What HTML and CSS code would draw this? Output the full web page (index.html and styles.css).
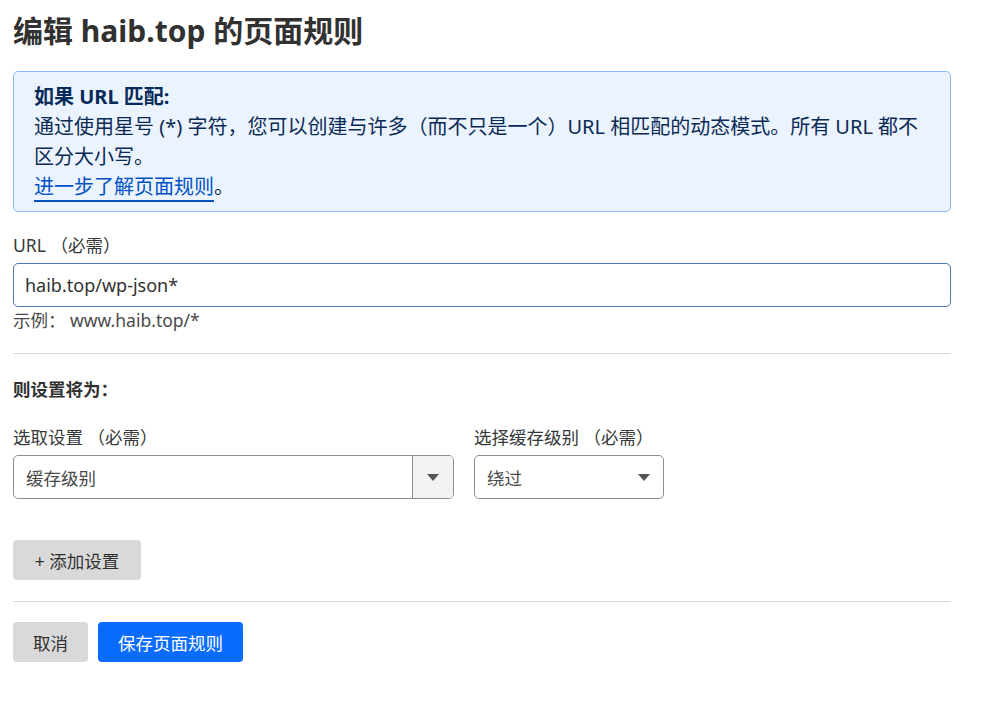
FILE: index.html
```html
<!DOCTYPE html>
<html lang="zh-CN">
<head>
<meta charset="utf-8">
<title>编辑 haib.top 的页面规则</title>
<link rel="stylesheet" href="styles.css">
</head>
<body>
<main class="page">
  <h1 class="title">编辑 haib.top 的页面规则</h1>

  <section class="info">
    <div class="info-head">如果 URL 匹配:</div>
    <p class="info-text">通过使用星号 (*) 字符，您可以创建与许多（而不只是一个）URL 相匹配的动态模式。所有 URL 都不区分大小写。</p>
    <p class="info-text"><a class="link" href="#">进一步了解页面规则</a>。</p>
  </section>

  <div class="field">
    <label class="label">URL （必需）</label>
    <div class="input">haib.top/wp-json*</div>
    <div class="hint">示例： www.haib.top/*</div>
  </div>

  <hr class="divider">

  <div class="subhead">则设置将为：</div>

  <div class="settings">
    <div class="col col-wide">
      <label class="label">选取设置 （必需）</label>
      <div class="select select-combo">
        <span class="select-value">缓存级别</span>
        <span class="select-btn"><span class="caret"></span></span>
      </div>
    </div>
    <div class="col col-narrow">
      <label class="label">选择缓存级别 （必需）</label>
      <div class="select select-simple">
        <span class="select-value">绕过</span>
        <span class="caret"></span>
      </div>
    </div>
  </div>

  <button class="btn btn-gray btn-add">+ 添加设置</button>

  <hr class="divider divider-2">

  <div class="actions">
    <button class="btn btn-gray">取消</button>
    <button class="btn btn-blue">保存页面规则</button>
  </div>
</main>
</body>
</html>
```

FILE: styles.css
```css
* { box-sizing: border-box; }
html, body { margin: 0; padding: 0; background: #fff; }
body {
  font-family: "Noto Sans", "Noto Sans CJK SC", sans-serif;
  color: #36393a;
  font-size: 17.5px;
}
.page {
  width: 951px;
  padding: 13px 0 0 13px;
}
.title {
  margin: 0;
  font-size: 30px;
  line-height: 36px;
  font-weight: 700;
  color: #313131;
}
.info {
  margin-top: 22px;
  background: #ebf3fe;
  border: 1px solid #8ab8f7;
  border-radius: 5px;
  padding: 10px 20px 9px 20px;
  color: #0a2a55;
  font-size: 20px;
  line-height: 30px;
}
.info-head { font-weight: 700; color: #062a5a; }
.info-text { margin: 0; }
.link {
  color: #0051c3;
  text-decoration: none;
  border-bottom: 2px solid #0051c3;
}
.field { margin-top: 20px; }
.label {
  display: block;
  line-height: 26px;
  color: #36393a;
}
.input {
  margin-top: 5px;
  height: 44px;
  border: 1px solid #4a75b5;
  border-radius: 5px;
  padding: 0 11px;
  display: flex;
  align-items: center;
  font-size: 18px;
  color: #313131;
}
.hint { line-height: 26px; color: #4a4a4a; }
.divider {
  margin: 20px 0 0 0;
  border: 0;
  border-top: 1px solid #d9d9d9;
  height: 0;
}
.subhead {
  margin-top: 22px;
  font-weight: 700;
  line-height: 26px;
  color: #313131;
}
.settings {
  margin-top: 22px;
  display: flex;
  gap: 20px;
}
.col-wide { width: 441px; }
.col-narrow { width: 190px; }
.select {
  margin-top: 5px;
  height: 44px;
  border: 1px solid #8f8f8f;
  border-radius: 5px;
  display: flex;
  align-items: center;
  color: #4a4a4a;
  overflow: hidden;
}
.select-value { flex: 1; padding-left: 12px; }
.select-btn {
  width: 41px;
  align-self: stretch;
  background: #f2f2f2;
  border-left: 1px solid #8f8f8f;
  display: flex;
  align-items: center;
  justify-content: center;
}
.caret {
  width: 0; height: 0;
  border-left: 6px solid transparent;
  border-right: 6px solid transparent;
  border-top: 7px solid #555;
}
.select-simple .caret { margin-right: 13px; }
.btn {
  font-family: inherit;
  font-size: 17.5px;
  height: 40px;
  border: 0;
  border-radius: 4px;
  padding: 0 20px;
  cursor: pointer;
}
.btn-gray { background: #d9d9d9; color: #313131; }
.btn-blue { background: #0a6cff; color: #fff; }
.btn-add { margin-top: 41px; display: block; width: 128px; padding: 0; }
.divider-2 { margin-top: 21px; }
.actions {
  margin-top: 20px;
  display: flex;
  gap: 10px;
}
.actions .btn-gray { width: 75px; padding: 0; }
.actions .btn-blue { width: 145px; padding: 0; }
```
